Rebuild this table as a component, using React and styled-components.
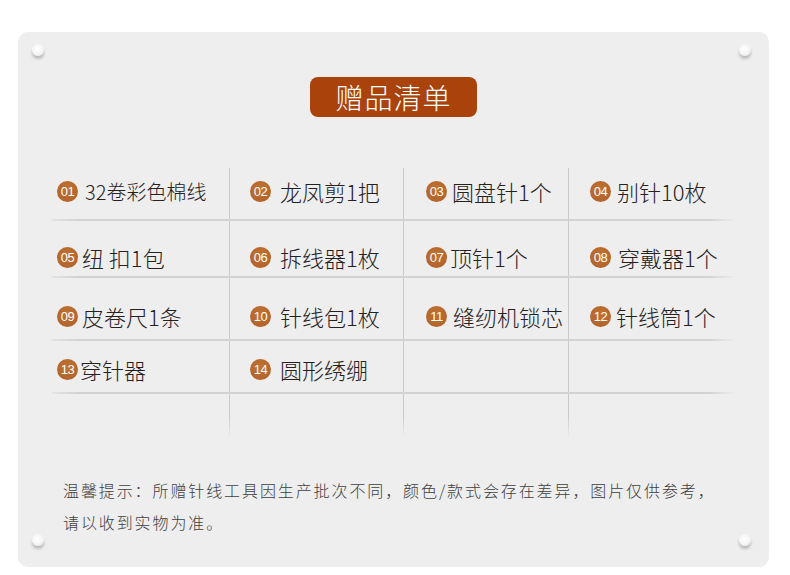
import React from "react";
import styled, { createGlobalStyle } from "styled-components";

const GlobalStyle = createGlobalStyle`
  html, body {
    margin: 0;
    padding: 0;
    background: #ffffff;
  }
  body {
    font-family: "Noto Sans CJK SC", "Noto Sans", sans-serif;
  }
`;

const Page = styled.div`
  width: 790px;
  height: 575px;
  padding: 32px 21px 8px 18px;
  box-sizing: border-box;
`;

const Card = styled.div`
  position: relative;
  height: 535px;
  background: #eeeeee;
  border-radius: 10px;
  padding: 45px 34px 0 34px;
  box-sizing: border-box;
  display: flex;
  flex-direction: column;
  align-items: center;
`;

const Pin = styled.span`
  position: absolute;
  width: 12px;
  height: 12px;
  border-radius: 50%;
  background: radial-gradient(circle at 45% 40%, #ffffff 0%, #f4f4f4 55%, #d6d6d6 100%);
  box-shadow: 0 3px 3px rgba(0, 0, 0, 0.22);
  ${(p) => (p.$top ? "top: 12px;" : "bottom: 21px;")}
  ${(p) => (p.$left ? "left: 14px;" : "right: 18px;")}
`;

const Title = styled.div`
  width: 167px;
  height: 40px;
  background: #a9420b;
  border-radius: 8px;
  color: #ffffff;
  font-size: 28px;
  font-weight: 300;
  line-height: 40px;
  letter-spacing: 1px;
  text-align: center;
`;

const Table = styled.div`
  margin-top: 51px;
  width: 683px;
  display: flex;
  flex-direction: column;
`;

const Row = styled.div`
  display: grid;
  grid-template-columns: 177px 174px 165px 167px;
  height: ${(p) => p.$h}px;
  box-sizing: border-box;
  border-bottom: ${(p) => (p.$last ? "0" : "2px solid")};
  border-image: ${(p) =>
    p.$last
      ? "none"
      : "linear-gradient(to right, rgba(205,205,205,0.3), #d2d2d2 4%, #d2d2d2 96%, rgba(205,205,205,0)) 1"};
`;

const Cell = styled.div`
  display: flex;
  align-items: flex-start;
  padding-top: ${(p) => p.$pad}px;
  padding-left: ${(p) => p.$indent}px;
  box-sizing: border-box;
  border-left: 1px solid;
  border-image: ${(p) =>
    p.$fade
      ? "linear-gradient(to bottom, #c9c9c9 50%, rgba(201,201,201,0)) 1"
      : "linear-gradient(#c9c9c9, #c9c9c9) 1"};
  &:first-child {
    border-left-width: 0;
  }
`;

const Num = styled.span`
  flex: none;
  width: 21px;
  height: 21px;
  margin-top: 2px;
  border-radius: 50%;
  background: radial-gradient(circle at 50% 35%, #bf7232 0%, #b4652b 70%, #a95c25 100%);
  color: #ffffff;
  font-family: "Liberation Sans", "DejaVu Sans", sans-serif;
  font-size: 13px;
  line-height: 21px;
  letter-spacing: -0.5px;
  text-align: center;
`;

const Label = styled.span`
  margin-left: ${(p) => p.$gap}px;
  font-size: ${(p) => p.$size}px;
  font-weight: 300;
  line-height: 25px;
  color: #26211e;
  white-space: pre;
`;

const Note = styled.p`
  align-self: stretch;
  margin: 37px 0 0 11px;
  font-size: 16px;
  font-weight: 300;
  line-height: 32px;
  letter-spacing: 1.9px;
  color: #3f3f3f;
`;

const indents = [5, 20, 22, 21];

const rows = [
  {
    h: 53,
    pad: 11,
    items: [
      ["01", "32卷彩色棉线", 7, 20],
      ["02", "龙凤剪1把", 9],
      ["03", "圆盘针1个", 5],
      ["04", "别针10枚", 6],
    ],
  },
  {
    h: 57,
    pad: 24,
    items: [
      ["05", "纽 扣1包", 4],
      ["06", "拆线器1枚", 9],
      ["07", "顶针1个", 3],
      ["08", "穿戴器1个", 7],
    ],
  },
  {
    h: 63,
    pad: 26,
    items: [
      ["09", "皮卷尺1条", 4],
      ["10", "针线包1枚", 9],
      ["11", "缝纫机锁芯", 6],
      ["12", "针线筒1个", 5],
    ],
  },
  {
    h: 53,
    pad: 16,
    items: [["13", "穿针器", 2], ["14", "圆形绣绷", 9], null, null],
  },
  { h: 43, pad: 0, items: [null, null, null, null], last: true },
];

export default function App() {
  return (
    <Page>
      <GlobalStyle />
      <Card>
        <Pin $top $left />
        <Pin $top />
        <Pin $left />
        <Pin />
        <Title>赠品清单</Title>
        <Table>
          {rows.map((row, r) => (
            <Row key={r} $h={row.h} $last={row.last}>
              {row.items.map((item, c) => (
                <Cell key={c} $pad={row.pad} $indent={indents[c]} $fade={row.last}>
                  {item && (
                    <>
                      <Num>{item[0]}</Num>
                      <Label $gap={item[2]} $size={item[3] || 22}>
                        {item[1]}
                      </Label>
                    </>
                  )}
                </Cell>
              ))}
            </Row>
          ))}
        </Table>
        <Note>
          温馨提示：所赠针线工具因生产批次不同，颜色/款式会存在差异，图片仅供参考，
          <br />
          请以收到实物为准。
        </Note>
      </Card>
    </Page>
  );
}
